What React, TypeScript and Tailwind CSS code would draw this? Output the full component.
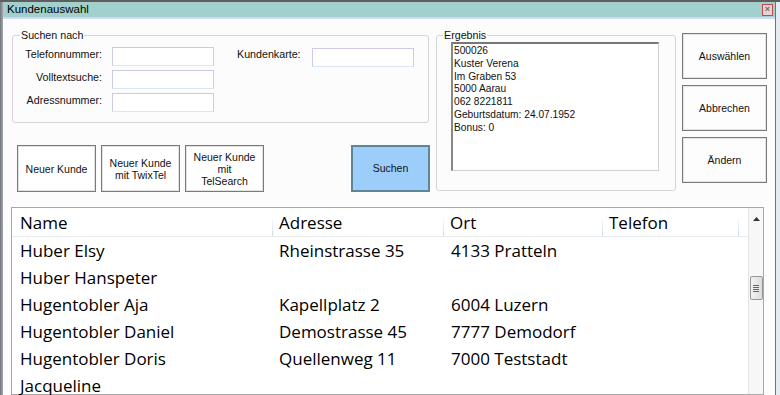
import React from "react";

const ui = { fontFamily: '"Liberation Sans", Arial, sans-serif' };
const listFont = { fontFamily: '"Open Sans", "Liberation Sans", sans-serif' };

function SmallButton({ children, className = "" }: { children: React.ReactNode; className?: string }) {
  return (
    <div
      className={
        "flex items-center justify-center text-center text-[10.5px] leading-[12px] text-[#111] border border-[#7a7a7a] shadow-[inset_0_0_0_1px_#e2e2e2] " +
        className
      }
    >
      {children}
    </div>
  );
}

function Field({ w = "w-[102px]" }: { w?: string }) {
  return <div className={"h-[19px] bg-white border border-[#c9cbe9] border-b-[#d6e8f5] " + w} />;
}

const rows = [
  ["Huber Elsy", "Rheinstrasse 35", "4133 Pratteln", ""],
  ["Huber Hanspeter", "", "", ""],
  ["Hugentobler Aja", "Kapellplatz 2", "6004 Luzern", ""],
  ["Hugentobler Daniel", "Demostrasse 45", "7777 Demodorf", ""],
  ["Hugentobler Doris", "Quellenweg 11", "7000 Teststadt", ""],
  ["Jacqueline", "", "", ""],
];

function HeaderSep() {
  return <div className="w-px h-[20px] self-end bg-gradient-to-b from-transparent to-[#c9dcec]" />;
}

export default function App() {
  return (
    <div className="w-[780px] h-[395px] overflow-hidden flex flex-col bg-[#e8edf2]" style={ui}>
      <div className="h-[2px] bg-[#5e5e5e]" />
      <div className="flex flex-1 min-h-0">
        <div className="w-[3px] bg-gradient-to-r from-[#6f7480] to-[#a9a9a9]" />
        <div className="w-[772px] flex flex-col">
          <div className="h-[15px] bg-[#a1d0cd] flex items-center justify-between pl-[4px] pr-[2px]">
            <span className="text-[11.5px] leading-none text-[#000]">Kundenauswahl</span>
            <div className="w-[11px] h-[12px] border border-[#c44a4a] bg-[#e6d3d3] flex items-center justify-center text-[9px] leading-none text-[#6b6b6b] font-bold">
              ×
            </div>
          </div>
          <div className="h-[2px] bg-[#d6d6f6]" />
          <div className="flex-1 min-h-0 flex flex-col bg-[#fcfcfc]">
            <div className="flex items-start pl-[9px]">
              {/* left column */}
              <div className="w-[418px] flex flex-col">
                <fieldset className="mt-[10px] w-[417px] h-[94px] border border-[#d4d4d4] rounded-[3px] pl-[1px]">
                  <legend className="ml-[6px] px-[1px] text-[10.7px] leading-[12px] text-[#111]">Suchen nach</legend>
                  <div className="flex pt-[6px]">
                    <div className="flex flex-col gap-[4px]">
                      {["Telefonnummer:", "Volltextsuche:", "Adressnummer:"].map((l) => (
                        <div key={l} className="flex items-start h-[19px]">
                          <div className="w-[88px] text-right text-[10.7px] leading-[12px] pt-[1px] text-[#111]">{l}</div>
                          <div className="ml-[10px]">
                            <Field />
                          </div>
                        </div>
                      ))}
                    </div>
                    <div className="flex items-start h-[19px] ml-[23px]">
                      <div className="w-[72px] text-[10.7px] leading-[12px] pt-[1px] text-[#111]">Kundenkarte:</div>
                      <div className="ml-[3px] mt-[1px]">
                        <Field />
                      </div>
                    </div>
                  </div>
                </fieldset>
                <div className="flex mt-[22px] pl-[5px] h-[47px]">
                  <SmallButton className="w-[79px] h-[47px] bg-white">Neuer Kunde</SmallButton>
                  <SmallButton className="w-[79px] h-[47px] bg-white ml-[5px]">
                    Neuer Kunde
                    <br />
                    mit TwixTel
                  </SmallButton>
                  <SmallButton className="w-[79px] h-[47px] bg-white ml-[5px]">
                    Neuer Kunde
                    <br />
                    mit
                    <br />
                    TelSearch
                  </SmallButton>
                  <div className="ml-auto w-[79px] h-[47px] flex items-center justify-center text-[10.5px] text-[#111] bg-[#9dcdfb] border-2 border-[#5d8797]">
                    Suchen
                  </div>
                </div>
              </div>
              {/* Ergebnis */}
              <fieldset className="ml-[6px] mt-[10px] w-[240px] h-[162px] border border-[#d4d4d4] rounded-[3px]">
                <legend className="ml-[6px] px-[1px] text-[10.7px] leading-[12px] text-[#111]">Ergebnis</legend>
                <div className="ml-[14px] mt-[1px] w-[208px] h-[129px] bg-white border-t-2 border-l-2 border-r border-b border-t-[#777] border-l-[#888] border-r-[#d0d0d0] border-b-[#d0d0d0] pl-[1px] pt-[1px] text-[10.2px] leading-[12.8px] text-[#111]">
                  <div>500026</div>
                  <div>Kuster Verena</div>
                  <div>Im Graben 53</div>
                  <div>5000 Aarau</div>
                  <div>062 8221811</div>
                  <div>Geburtsdatum: 24.07.1952</div>
                  <div>Bonus: 0</div>
                </div>
              </fieldset>
              {/* right buttons */}
              <div className="ml-[6px] mt-[14px] flex flex-col gap-[6px]">
                <SmallButton className="w-[85px] h-[46px] bg-[#fdfdfd]">Auswählen</SmallButton>
                <SmallButton className="w-[85px] h-[46px] bg-[#fdfdfd]">Abbrechen</SmallButton>
                <SmallButton className="w-[85px] h-[46px] bg-[#fdfdfd]">Ändern</SmallButton>
              </div>
            </div>
            {/* List */}
            <div className="ml-[8px] mt-[15px] w-[753px] flex-1 min-h-0 border border-[#a8a8a8] bg-white flex">
              <div className="flex-1 flex flex-col text-[17px] text-black" style={listFont}>
                <div className="h-[29px] shrink-0 flex border-b border-[#e6e9ee]">
                  <div className="w-[260px] pl-[8px] pt-[2px] flex items-center">Name</div>
                  <HeaderSep />
                  <div className="w-[170px] pl-[6px] pt-[2px] flex items-center">Adresse</div>
                  <HeaderSep />
                  <div className="w-[158px] pl-[6px] pt-[2px] flex items-center">Ort</div>
                  <HeaderSep />
                  <div className="w-[135px] pl-[6px] pt-[2px] flex items-center">Telefon</div>
                  <HeaderSep />
                </div>
                {rows.map((r, i) => (
                  <div key={i} className="h-[27px] shrink-0 pt-[1px] flex items-center">
                    <div className="w-[261px] pl-[8px] whitespace-nowrap">{r[0]}</div>
                    <div className="w-[171px] pl-[6px] whitespace-nowrap">{r[1]}</div>
                    <div className="w-[159px] pl-[7px] whitespace-nowrap">{r[2]}</div>
                    <div className="w-[136px] pl-[7px]">{r[3]}</div>
                  </div>
                ))}
              </div>
              <div className="w-[15px] border-l border-[#e4e4e4] bg-[#f7f7f7] flex flex-col items-center">
                <svg width="7" height="4" viewBox="0 0 7 4" className="mt-[9px]">
                  <path d="M0 4 L3.5 0 L7 4 Z" fill="#333" />
                </svg>
                <div className="mt-[55px] w-[13px] h-[24px] rounded-[2px] border border-[#979797] bg-gradient-to-r from-[#f2f2f2] to-[#dcdcdc] flex flex-col items-center justify-center gap-[1px]">
                  <div className="w-[6px] h-px bg-[#666]" />
                  <div className="w-[6px] h-px bg-[#666]" />
                  <div className="w-[6px] h-px bg-[#666]" />
                  <div className="w-[6px] h-px bg-[#666]" />
                </div>
              </div>
            </div>
          </div>
        </div>
        <div className="w-px bg-[#3b7fc9]" />
        <div className="flex-1 bg-[#e4ebf2]" />
      </div>
    </div>
  );
}
